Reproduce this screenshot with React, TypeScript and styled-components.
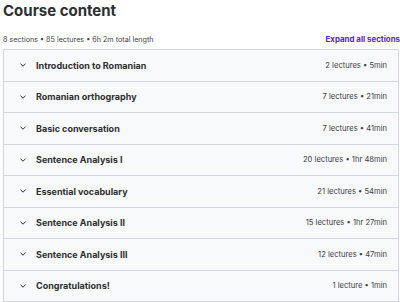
import React from "react";
import styled, { createGlobalStyle } from "styled-components";

const sections = [
  { title: "Introduction to Romanian", meta: "2 lectures • 5min" },
  { title: "Romanian orthography", meta: "7 lectures • 21min" },
  { title: "Basic conversation", meta: "7 lectures • 41min" },
  { title: "Sentence Analysis I", meta: "20 lectures • 1hr 48min" },
  { title: "Essential vocabulary", meta: "21 lectures • 54min" },
  { title: "Sentence Analysis II", meta: "15 lectures • 1hr 27min" },
  { title: "Sentence Analysis III", meta: "12 lectures • 47min" },
  { title: "Congratulations!", meta: "1 lecture • 1min" },
];

const Chevron = () => (
  <svg width="8" height="6" viewBox="0 0 8 6" fill="none">
    <path d="M1.5 1.8 L4 4.2 L6.5 1.8" stroke="#2d2f31" strokeWidth="1" />
  </svg>
);

const App: React.FC = () => (
  <>
    <GlobalStyle />
    <Page>
      <Title>Course content</Title>
      <SummaryBar>
        <Summary>8 sections • 85 lectures • 6h 2m total length</Summary>
        <ExpandLink>Expand all sections</ExpandLink>
      </SummaryBar>
      <SectionList>
        {sections.map((s) => (
          <SectionRow key={s.title}>
            <ChevronBox>
              <Chevron />
            </ChevronBox>
            <SectionTitle>{s.title}</SectionTitle>
            <SectionMeta>{s.meta}</SectionMeta>
          </SectionRow>
        ))}
      </SectionList>
    </Page>
  </>
);

const GlobalStyle = createGlobalStyle`
  body {
    margin: 0;
    background: #ffffff;
    font-family: Inter, "Noto Sans", sans-serif;
    color: #2d2f31;
  }
`;

const Page = styled.div`
  width: 400px;
  height: 302px;
  padding-left: 3px;
  box-sizing: border-box;
  overflow: hidden;
`;

const Title = styled.h2`
  margin: 0;
  padding-top: 1px;
  font-size: 15px;
  line-height: 20px;
  font-weight: 700;
`;

const SummaryBar = styled.div`
  display: flex;
  align-items: center;
  justify-content: space-between;
  height: 14px;
  margin-top: 11px;
  margin-bottom: 3px;
`;

const Summary = styled.span`
  font-size: 7.2px;
  color: #3e4143;
`;

const ExpandLink = styled.span`
  font-size: 7.9px;
  font-weight: 700;
  color: #5624d0;
  white-space: nowrap;
`;

const SectionList = styled.div`
  width: 396px;
  border: 1px solid #d1d7dc;
  border-bottom: none;
  box-sizing: border-box;
`;

const SectionRow = styled.div`
  display: flex;
  align-items: center;
  height: 31.5px;
  box-sizing: border-box;
  background: #f7f9fa;
  border-bottom: 1px solid #d1d7dc;
  padding: 0 11px 0 15px;
`;

const ChevronBox = styled.span`
  display: flex;
  width: 8px;
  margin-right: 9px;
`;

const SectionTitle = styled.span`
  flex: 1;
  font-size: 9px;
  font-weight: 700;
  color: #2d2f31;
`;

const SectionMeta = styled.span`
  font-size: 7.6px;
  color: #3e4143;
`;

export default App;
